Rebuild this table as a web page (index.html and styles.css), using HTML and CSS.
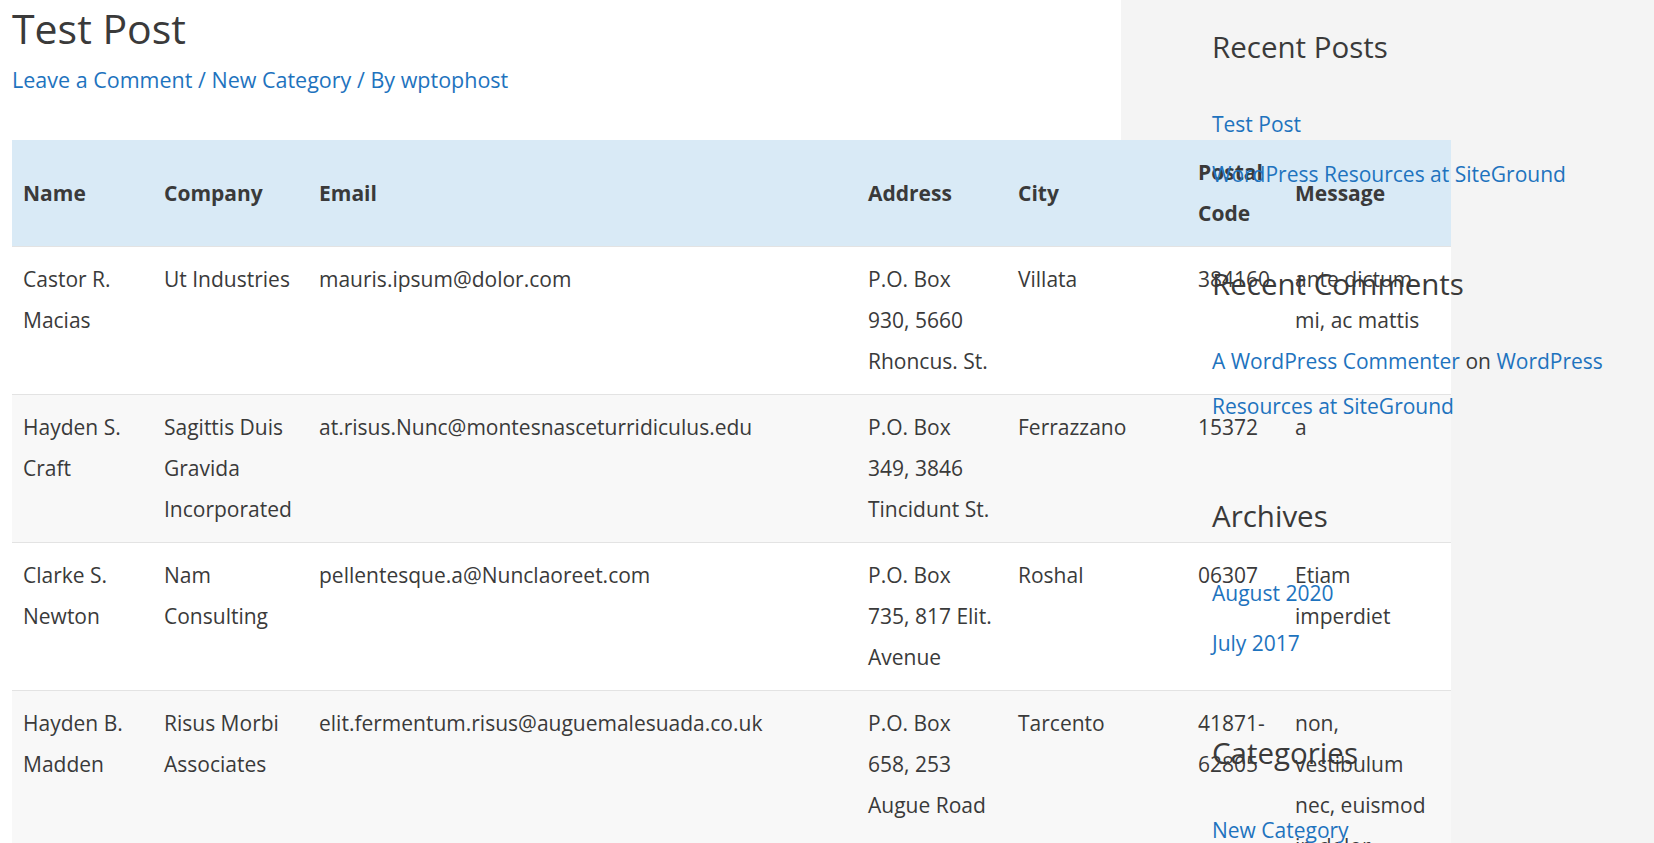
FILE: index.html
```html
<!DOCTYPE html>
<html lang="en">
<head>
<meta charset="utf-8">
<title>Test Post</title>
<link rel="stylesheet" href="styles.css">
</head>
<body>
<div class="site">
  <main class="primary">
    <article class="post">
      <h1 class="post-title">Test Post</h1>
      <div class="post-meta"><a href="#">Leave a Comment</a> / <a href="#">New Category</a> / By <a href="#">wptophost</a></div>
      <table class="data-table">
        <colgroup>
          <col class="c-name"><col class="c-company"><col class="c-email"><col class="c-address"><col class="c-city"><col class="c-postal"><col class="c-message">
        </colgroup>
        <thead>
          <tr><th>Name</th><th>Company</th><th>Email</th><th>Address</th><th>City</th><th>Postal Code</th><th>Message</th></tr>
        </thead>
        <tbody>
          <tr><td>Castor R. Macias</td><td>Ut Industries</td><td>mauris.ipsum@dolor.com</td><td>P.O. Box 930, 5660 Rhoncus. St.</td><td>Villata</td><td>384160</td><td>ante dictum mi, ac mattis</td></tr>
          <tr><td>Hayden S. Craft</td><td>Sagittis Duis Gravida Incorporated</td><td>at.risus.Nunc@montesnasceturridiculus.edu</td><td>P.O. Box 349, 3846 Tincidunt St.</td><td>Ferrazzano</td><td>15372</td><td>a</td></tr>
          <tr><td>Clarke S. Newton</td><td>Nam Consulting</td><td>pellentesque.a@Nunclaoreet.com</td><td>P.O. Box 735, 817 Elit. Avenue</td><td>Roshal</td><td>06307</td><td>Etiam imperdiet</td></tr>
          <tr><td>Hayden B. Madden</td><td>Risus Morbi Associates</td><td>elit.fermentum.risus@auguemalesuada.co.uk</td><td>P.O. Box 658, 253 Augue Road</td><td>Tarcento</td><td>41871-62805</td><td>non, vestibulum nec, euismod in dolor.</td></tr>
        </tbody>
      </table>
    </article>
  </main>
  <aside class="sidebar">
    <section class="widget">
      <h2 class="widget-title">Recent Posts</h2>
      <ul class="widget-list">
        <li><a href="#">Test Post</a></li>
        <li><a href="#">WordPress Resources at SiteGround</a></li>
      </ul>
    </section>
    <section class="widget">
      <h2 class="widget-title">Recent Comments</h2>
      <ul class="widget-list">
        <li><a href="#">A WordPress Commenter</a> on <a href="#">WordPress Resources at SiteGround</a></li>
      </ul>
    </section>
    <section class="widget">
      <h2 class="widget-title">Archives</h2>
      <ul class="widget-list">
        <li><a href="#">August 2020</a></li>
        <li><a href="#">July 2017</a></li>
      </ul>
    </section>
    <section class="widget">
      <h2 class="widget-title">Categories</h2>
      <ul class="widget-list">
        <li><a href="#">New Category</a></li>
      </ul>
    </section>
  </aside>
</div>
</body>
</html>
```
FILE: styles.css
```css
html, body {
  margin: 0;
  padding: 0;
}
body {
  font-family: "Open Sans", "Noto Sans", sans-serif;
  color: #3a3a3a;
  background: #f4f4f4;
  overflow: hidden;
}
a {
  color: #1e73be;
  text-decoration: none;
}
.site {
  display: flex;
  min-height: 100vh;
  background: #f4f4f4;
}
.primary {
  flex: none;
  width: 1121px;
  background: #fff;
  padding-left: 12px;
  box-sizing: border-box;
}
.post-title {
  margin: 0;
  padding-top: 3px;
  font-size: 41px;
  font-weight: 400;
  line-height: 51px;
  color: #3a3a3a;
}
.post-meta {
  font-size: 21.5px;
  line-height: 30px;
  margin-top: 11px;
  margin-bottom: 45px;
  color: #1e73be;
}
.data-table {
  table-layout: fixed;
  border-collapse: collapse;
  width: 1439px;
  font-size: 21px;
  line-height: 41px;
}
.c-name { width: 141px; }
.c-company { width: 155px; }
.c-email { width: 549px; }
.c-address { width: 150px; }
.c-city { width: 180px; }
.c-postal { width: 97px; }
.c-message { width: 167px; }
.data-table th,
.data-table td {
  padding: 12px 11px;
  text-align: left;
  word-wrap: break-word;
}
.data-table th {
  font-weight: 700;
  vertical-align: middle;
}
.data-table td {
  vertical-align: top;
}
.data-table thead tr {
  background: #d9eaf6;
}
.data-table tr {
  border-bottom: 1px solid #e3e3e3;
  background: #fff;
}
.data-table tbody tr:nth-child(even) {
  background: #f8f8f8;
}
.sidebar {
  flex: 1;
  padding: 27px 0 0 91px;
}
.widget {
  margin-bottom: 67px;
}
.widget-title {
  margin: 0 0 35px;
  font-size: 29.5px;
  font-weight: 400;
  line-height: 40px;
  color: #3a3a3a;
}
.widget-list {
  list-style: none;
  margin: 0;
  padding: 0;
  font-size: 21px;
  line-height: 45px;
}
.widget-list li {
  margin-bottom: 5px;
}
```
